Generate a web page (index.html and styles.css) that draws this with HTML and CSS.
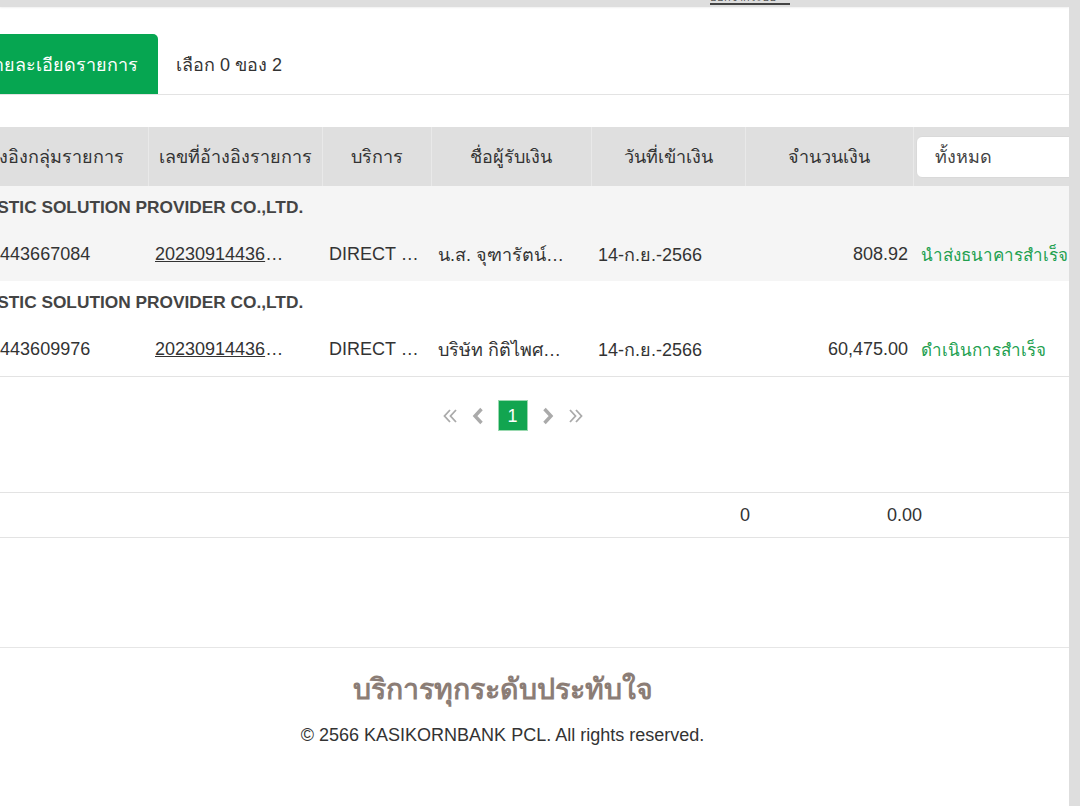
FILE: index.html
```html
<!DOCTYPE html>
<html lang="th">
<head>
    <meta charset="UTF-8">
    <meta name="viewport" content="width=device-width, initial-scale=1.0">
    <title>รายการเงินเข้า</title>
    <link rel="stylesheet" href="styles.css">
</head>
<body>
<div class="shell">
    <div class="main">

        <div class="topbar">
            <a class="top-link" href="#">ออกจากระบบ</a>
        </div>

        <div class="toolbar">
            <button type="button" class="btn-detail">ดูรายละเอียดรายการ</button>
            <span class="selected">เลือก 0 ของ 2</span>
        </div>

        <div class="table-wrap">
            <table class="list">
                <colgroup>
                    <col class="c-group">
                    <col class="c-ref">
                    <col class="c-service">
                    <col class="c-payee">
                    <col class="c-date">
                    <col class="c-amount">
                    <col class="c-status">
                </colgroup>
                <thead>
                    <tr>
                        <th>เลขที่อ้างอิงกลุ่มรายการ</th>
                        <th>เลขที่อ้างอิงรายการ</th>
                        <th>บริการ</th>
                        <th>ชื่อผู้รับเงิน</th>
                        <th>วันที่เข้าเงิน</th>
                        <th>จำนวนเงิน</th>
                        <th class="th-filter">
                            <div class="filter">ทั้งหมด</div>
                        </th>
                    </tr>
                </thead>
                <tbody>
                    <tr class="group shaded">
                        <td colspan="7">LOGISTIC SOLUTION PROVIDER CO.,LTD.</td>
                    </tr>
                    <tr class="item shaded">
                        <td>20230914443667084</td>
                        <td><a class="trunc ref" href="#">2023091443667084001</a></td>
                        <td><span class="trunc svc">DIRECT CREDIT</span></td>
                        <td><span class="trunc">น.ส. จุฑารัตน์ ศรีสุข</span></td>
                        <td>14-ก.ย.-2566</td>
                        <td class="num">808.92</td>
                        <td class="status">นำส่งธนาคารสำเร็จ</td>
                    </tr>
                    <tr class="group">
                        <td colspan="7">LOGISTIC SOLUTION PROVIDER CO.,LTD.</td>
                    </tr>
                    <tr class="item last">
                        <td>20230914443609976</td>
                        <td><a class="trunc ref" href="#">2023091443609976001</a></td>
                        <td><span class="trunc svc">DIRECT CREDIT</span></td>
                        <td><span class="trunc">บริษัท กิติไพศาล จำกัด</span></td>
                        <td>14-ก.ย.-2566</td>
                        <td class="num">60,475.00</td>
                        <td class="status">ดำเนินการสำเร็จ</td>
                    </tr>
                </tbody>
            </table>
        </div>

        <div class="pager">
            <a class="pg-arrow" href="#" title="หน้าแรก">
                <svg width="16" height="16" viewBox="0 0 16 16"><path d="M8 2 L2.5 8 L8 14 M14 2 L8.5 8 L14 14" fill="none" stroke="#aaa" stroke-width="1.8"/></svg>
            </a>
            <a class="pg-arrow" href="#" title="ก่อนหน้า">
                <svg width="12" height="18" viewBox="0 0 12 18"><path d="M9.5 2 L3 9 L9.5 16" fill="none" stroke="#aaa" stroke-width="3.4"/></svg>
            </a>
            <span class="pg-current">1</span>
            <a class="pg-arrow" href="#" title="ถัดไป">
                <svg width="12" height="18" viewBox="0 0 12 18"><path d="M2.5 2 L9 9 L2.5 16" fill="none" stroke="#aaa" stroke-width="3.4"/></svg>
            </a>
            <a class="pg-arrow" href="#" title="หน้าสุดท้าย">
                <svg width="16" height="16" viewBox="0 0 16 16"><path d="M2 2 L7.5 8 L2 14 M8 2 L13.5 8 L8 14" fill="none" stroke="#aaa" stroke-width="1.8"/></svg>
            </a>
        </div>

        <div class="totals">
            <span></span>
            <span class="t-count">0</span>
            <span class="t-amount">0.00</span>
            <span></span>
        </div>

        <div class="footer">
            <div class="slogan">บริการทุกระดับประทับใจ</div>
            <div class="copy">© 2566 KASIKORNBANK PCL. All rights reserved.</div>
        </div>

    </div>
    <div class="scrollbar"></div>
</div>
</body>
</html>
```

FILE: styles.css
```css
body {
    margin: 0;
    font-family: "Liberation Sans", Arial, sans-serif;
    font-size: 18px;
    color: #333;
    background: #fff;
    overflow: hidden;
}
.shell {
    display: flex;
    height: 806px;
}
.main {
    flex: 1;
    min-width: 0;
    overflow: hidden;
}
.scrollbar {
    width: 11px;
    background: #dedede;
}

/* top bar */
.topbar {
    height: 7px;
    background: #dedede;
    overflow: hidden;
    padding-left: 710px;
    box-shadow: 0 1px 2px rgba(0, 0, 0, 0.06);
}
.top-link {
    display: inline-block;
    width: 80px;
    font-size: 11px;
    line-height: 11px;
    margin-top: -8px;
    color: #555;
    text-decoration: none;
    border-bottom: 2px solid #444;
    vertical-align: top;
}

/* toolbar */
.toolbar {
    display: flex;
    align-items: stretch;
    height: 60px;
    margin-top: 27px;
    border-bottom: 1px solid #e3e3e3;
}
.btn-detail {
    margin-left: -48px;
    padding: 0 20px;
    background: #06a651;
    color: #fff;
    border: none;
    border-radius: 0 5px 0 0;
    font-family: inherit;
    font-size: 18px;
    cursor: pointer;
}
.selected {
    display: flex;
    align-items: center;
    margin-left: 18px;
    color: #333;
}

/* table */
.table-wrap {
    margin-top: 32px;
    margin-left: -87px;
}
.list {
    table-layout: fixed;
    width: 1170px;
    border-collapse: collapse;
}
.c-group { width: 235px; }
.c-ref { width: 174px; }
.c-service { width: 109px; }
.c-payee { width: 160px; }
.c-date { width: 154px; }
.c-amount { width: 168px; }
.c-status { width: 170px; }

.list th {
    height: 59px;
    padding: 0;
    background: #dfdfdf;
    border-left: 1px solid #e9e9e9;
    font-weight: normal;
    color: #333;
    text-align: center;
}
.list th:first-child {
    border-left: none;
}
.list th.th-filter {
    text-align: left;
}
.filter {
    height: 40px;
    margin-left: 2px;
    padding-left: 18px;
    line-height: 40px;
    background: #fff;
    border: 1px solid #d9d9d9;
    border-radius: 6px;
    color: #444;
}

.list td {
    padding: 0 7px;
    white-space: nowrap;
    overflow: hidden;
    vertical-align: middle;
}
.shaded td {
    background: #f5f5f5;
}
.group td {
    height: 42px;
    padding-left: 42px;
    font-size: 17.3px;
    font-weight: bold;
    color: #444;
}
.item td {
    height: 53px;
}
.item.last td {
    border-bottom: 1px solid #e3e3e3;
}
.trunc {
    display: inline-block;
    max-width: 130px;
    overflow: hidden;
    text-overflow: ellipsis;
    vertical-align: middle;
    color: #333;
}
.svc {
    max-width: 92px;
}
.ref {
    text-decoration: underline;
}
.num {
    text-align: right;
    padding-right: 5px !important;
}
.status {
    padding-left: 8px !important;
    color: #22a04f;
    font-size: 17px;
}

/* pagination */
.pager {
    display: flex;
    justify-content: center;
    align-items: center;
    gap: 14px;
    height: 115px;
    padding-right: 44px;
    padding-bottom: 38px;
    box-sizing: border-box;
}
.pg-arrow {
    display: flex;
    align-items: center;
}
.pg-current {
    width: 30px;
    height: 31px;
    line-height: 31px;
    text-align: center;
    background: #12a550;
    color: #fff;
    border: 1px solid #9ad9b0;
    box-sizing: border-box;
}

/* totals */
.totals {
    display: grid;
    grid-template-columns: 1fr 80px 137px 147px;
    align-items: center;
    height: 44px;
    border-top: 1px solid #e3e3e3;
    border-bottom: 1px solid #e3e3e3;
}
.t-count {
    text-align: center;
}
.t-amount {
    text-align: right;
}

/* footer */
.footer {
    margin-top: 109px;
    border-top: 1px solid #e6e6e6;
    padding-top: 23px;
    padding-right: 64px;
    text-align: center;
}
.slogan {
    font-size: 28.5px;
    font-weight: bold;
    color: #8b7d76;
    line-height: 36px;
}
.copy {
    margin-top: 18px;
    font-size: 18px;
    color: #333;
}
```
